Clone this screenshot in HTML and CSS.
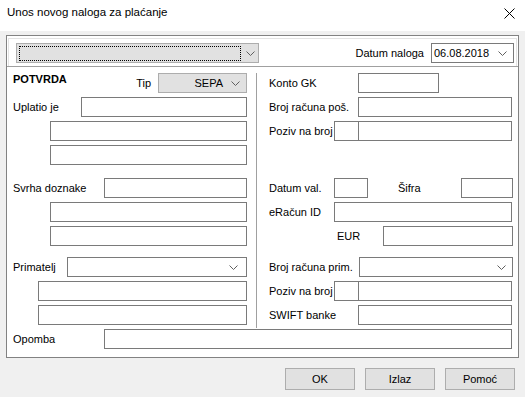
FILE: index.html
```html
<!DOCTYPE html>
<html lang="hr">
<head>
  <meta charset="UTF-8" />
  <title>Unos novog naloga za plaćanje</title>
  <link rel="stylesheet" href="styles.css">
</head>
<body>
  <div class="titlebar">
    <span class="title">Unos novog naloga za plaćanje</span>
    <svg class="close" width="11" height="11" viewBox="0 0 11 11">
      <path d="M0.5 0.5 L10.5 10.5 M10.5 0.5 L0.5 10.5" stroke="#000" stroke-width="1" fill="none" />
    </svg>
  </div>

  <div class="panel">
    <div class="toprow">
      <div class="combo combo-grey combo-main">
        <span class="focus"></span>
        <svg class="chev" width="9" height="5" viewBox="0 0 9 5"><polyline points="0.5,0.5 4.5,4.5 8.5,0.5" /></svg>
      </div>
      <span class="date-lbl">Datum naloga</span>
      <div class="combo date">
        <span class="date-val">06.08.2018</span>
        <svg class="chev" width="9" height="5" viewBox="0 0 9 5"><polyline points="0.5,0.5 4.5,4.5 8.5,0.5" /></svg>
      </div>
    </div>

    <div class="columns">
      <div class="col left">
        <div class="row">
          <span class="heading">POTVRDA</span>
          <span class="tip-lbl">Tip</span>
          <div class="combo combo-grey sepa">
            <span class="sepa-val">SEPA</span>
            <svg class="chev" width="9" height="5" viewBox="0 0 9 5"><polyline points="0.5,0.5 4.5,4.5 8.5,0.5" /></svg>
          </div>
        </div>
        <div class="row">
          <span>Uplatio je</span>
          <input class="field w-uplatio" type="text">
        </div>
        <div class="row end">
          <input class="field w-cont" type="text">
        </div>
        <div class="row end">
          <input class="field w-cont" type="text">
        </div>

        <div class="row group">
          <span>Svrha doznake</span>
          <input class="field w-svrha" type="text">
        </div>
        <div class="row end">
          <input class="field w-cont" type="text">
        </div>
        <div class="row end">
          <input class="field w-cont" type="text">
        </div>

        <div class="row group-b">
          <span>Primatelj</span>
          <div class="combo w-primatelj">
            <svg class="chev" width="9" height="5" viewBox="0 0 9 5"><polyline points="0.5,0.5 4.5,4.5 8.5,0.5" /></svg>
          </div>
        </div>
        <div class="row end">
          <input class="field w-prim-cont" type="text">
        </div>
        <div class="row end">
          <input class="field w-prim-cont" type="text">
        </div>
      </div>

      <div class="col right">
        <div class="row">
          <span class="lbl-wide">Konto GK</span>
          <input class="field w-konto" type="text">
        </div>
        <div class="row">
          <span class="lbl-wide">Broj računa poš.</span>
          <input class="field w-right" type="text">
        </div>
        <div class="row">
          <span class="lbl-narrow">Poziv na broj</span>
          <input class="field w-model" type="text">
          <input class="field w-right joined" type="text">
        </div>

        <div class="row group-skip">
          <span class="lbl-narrow">Datum val.</span>
          <input class="field w-datval" type="text">
          <span class="sifra-lbl">Šifra</span>
          <input class="field w-sifra push" type="text">
        </div>
        <div class="row">
          <span class="lbl-narrow">eRačun ID</span>
          <input class="field w-eracun" type="text">
        </div>
        <div class="row">
          <span class="eur-lbl">EUR</span>
          <input class="field w-eur push" type="text">
        </div>

        <div class="row group-b">
          <span class="lbl-prim">Broj računa prim.</span>
          <div class="combo w-right">
            <svg class="chev" width="9" height="5" viewBox="0 0 9 5"><polyline points="0.5,0.5 4.5,4.5 8.5,0.5" /></svg>
          </div>
        </div>
        <div class="row">
          <span class="lbl-narrow">Poziv na broj</span>
          <input class="field w-model" type="text">
          <input class="field w-right joined" type="text">
        </div>
        <div class="row">
          <span class="lbl-wide">SWIFT banke</span>
          <input class="field w-right" type="text">
        </div>
      </div>
    </div>

    <div class="row opomba">
      <span>Opomba</span>
      <input class="field w-opomba" type="text">
    </div>
  </div>

  <div class="buttons">
    <button class="btn">OK</button>
    <button class="btn">Izlaz</button>
    <button class="btn">Pomoć</button>
  </div>
</body>
</html>
```

FILE: styles.css
```css
body {
  margin: 0;
  background: #f0f0f0;
  font-family: "Liberation Sans", Arial, sans-serif;
  font-size: 11px;
  color: #000;
}
.titlebar {
  height: 31px;
  box-sizing: border-box;
  background: #fff;
  display: flex;
  align-items: flex-start;
  justify-content: space-between;
  padding: 5px 10px 0 7px;
}
.title {
  font-size: 11.5px;
  line-height: 15px;
}
.close {
  margin-top: 3px;
}
.panel {
  margin: 4px 0 0 6px;
  width: 513px;
  box-sizing: border-box;
  border: 1px solid #828282;
  background: #fff;
  padding-bottom: 8px;
}
.toprow {
  margin: 2px 1px 0;
  border: 1px solid #e3e3e3;
  border-bottom: none;
  display: flex;
  align-items: center;
  padding: 4px 2px 3px 7px;
}
.combo {
  box-sizing: border-box;
  height: 20px;
  display: flex;
  align-items: center;
  border: 1px solid #7a7a7a;
  background: #fff;
  padding: 0 6px 0 2px;
}
.combo-grey {
  background: #e1e1e1;
  border-color: #adadad;
}
.chev {
  margin-left: auto;
  fill: none;
  stroke: #606060;
  stroke-width: 1;
}
.combo-main {
  width: 243px;
  padding: 0 3px 0 2px;
}
.focus {
  width: 222px;
  height: 15px;
  box-sizing: border-box;
  border: 1px dotted #000;
}
.date-lbl {
  margin-left: auto;
  margin-right: 7px;
}
.date {
  width: 83px;
  padding-left: 2px;
}
.columns {
  border-top: 1px solid #a0a0a0;
  display: grid;
  grid-template-columns: 249px 1fr;
  padding-top: 6px;
}
.col.left {
  padding: 0 9px 3px 6px;
}
.col.right {
  border-left: 1px solid #a0a0a0;
  padding: 0 6px 3px 12px;
}
.row {
  display: flex;
  align-items: center;
  justify-content: space-between;
  height: 20px;
  margin-top: 4px;
}
.col .row:first-child {
  margin-top: 0;
}
.row.group {
  margin-top: 13px;
}
.row.group-skip {
  margin-top: 37px;
}
.row.group-b {
  margin-top: 11px;
}
.row.end {
  justify-content: flex-end;
}
.heading {
  font-weight: bold;
  align-self: flex-start;
  line-height: 13px;
}
.tip-lbl {
  margin-left: auto;
  margin-right: 7px;
}
.sepa {
  width: 89px;
}
.sepa-val {
  margin-left: auto;
  margin-right: 8px;
}
.sepa .chev {
  margin-left: 0;
}
.field {
  box-sizing: border-box;
  height: 20px;
  margin: 0;
  border: 1px solid #7a7a7a;
  background: #fff;
  padding: 0 2px;
  font: inherit;
}
.w-uplatio { width: 166px; }
.w-cont { width: 197px; }
.w-svrha { width: 143px; }
.w-primatelj { width: 180px; padding-right: 8px; }
.w-prim-cont { width: 209px; }
.w-opomba { width: 408px; }
.col.right .row {
  justify-content: flex-start;
}
.lbl-wide {
  width: 89px;
  flex: none;
}
.lbl-narrow {
  width: 65px;
  flex: none;
}
.lbl-prim {
  width: 90px;
  flex: none;
}
.w-konto { width: 81px; }
.w-right { width: 154px; }
.w-model { width: 25px; }
.joined { margin-left: -1px; }
.w-datval { width: 34px; }
.sifra-lbl {
  margin-left: 30px;
}
.w-sifra { width: 52px; }
.push { margin-left: auto; }
.w-eracun { width: 178px; }
.eur-lbl {
  margin-left: 68px;
}
.w-eur { width: 130px; }
.opomba {
  margin-top: 1px;
  padding: 0 6px;
}
.buttons {
  display: flex;
  justify-content: flex-end;
  gap: 10px;
  padding: 10px 10px 0 0;
}
.btn {
  width: 70px;
  height: 22px;
  margin: 0;
  background: #e1e1e1;
  border: 1px solid #adadad;
  font: inherit;
  color: #000;
  padding: 0;
}
```
